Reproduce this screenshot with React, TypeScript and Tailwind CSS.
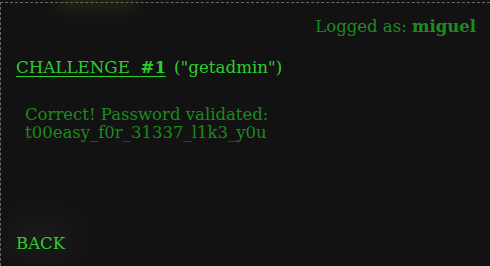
const App = () => {
  return (
    <div className="w-[490px] h-[266px] bg-[#121212] overflow-hidden pt-[2px]">
      <div
        className="relative h-[264px] border-t border-l border-dashed border-[#6b6b6b] flex flex-col"
        style={{ fontFamily: '"DejaVu Serif", serif' }}
      >
        {/* faint glow top-left and bottom-left */}
        <div className="absolute left-[55px] top-[-8px] w-[80px] h-[12px] rounded-full bg-[#4a5a10] opacity-40 blur-sm" />
        <div className="absolute left-[5px] top-[215px] w-[70px] h-[40px] rounded-full bg-[#262a26] opacity-40 blur-lg" />

        <div className="relative flex justify-end pr-[14px] pt-[12px] text-[16.5px] text-[#1f8a1f] font-light">
          <span>
            Logged as: <span className="font-bold">miguel</span>
          </span>
        </div>

        <div className="relative pl-[15px] mt-[15px] text-[16.7px] text-[#2fcc2f] flex gap-[8px] items-baseline">
          <span className="underline underline-offset-[3px]">CHALLENGE&nbsp;&nbsp;<span className="font-bold">#1</span></span>
          <span>("getadmin")</span>
        </div>

        <div className="relative pl-[24px] mt-[26px] text-[16.5px] leading-[18px] text-[#1c8a1c]">
          <div>Correct! Password validated:</div>
          <div>t00easy_f0r_31337_l1k3_y0u</div>
        </div>

        <div className="relative mt-auto mb-[9px] pl-[15px] text-[16.5px] text-[#2fcc2f]">BACK</div>
      </div>
    </div>
  );
};

export default App;
